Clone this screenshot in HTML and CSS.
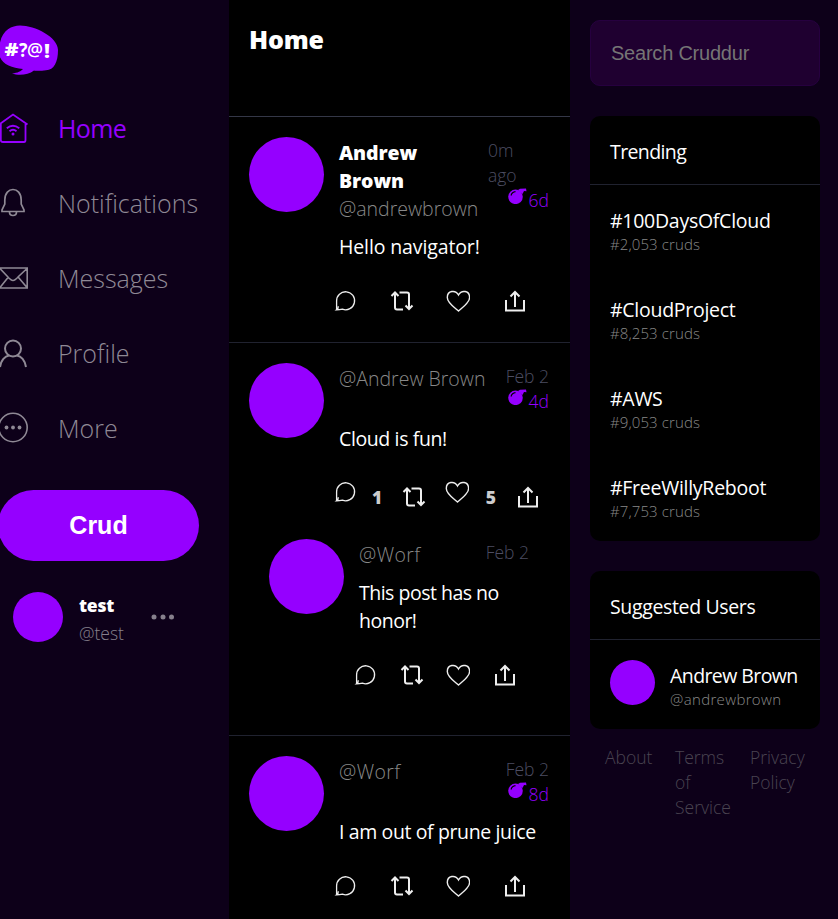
FILE: index.html
```html
<!DOCTYPE html>
<html lang="en">
<head>
<meta charset="utf-8">
<title>Cruddur</title>
<link rel="stylesheet" href="styles.css">
</head>
<body>
<svg class="defs" aria-hidden="true">
  <symbol id="comment" viewBox="0 0 24 24"><path d="M3.600 20.800V12A9 9 0 1 1 9.500 20.200Q6.500 20.800 3.600 20.800Q5.500 19.500 5.300 17.200" fill="none" stroke="currentColor" stroke-width="1.300"/></symbol>
  <symbol id="repost" viewBox="0 0 24 24"><path d="M1.500 7 5 3.500 8.500 7M5 4v14.500q0 2 2 2h6M9.500 3.500H17q2 0 2 2V20M15.500 16.500l3.500 3.500 3.500-3.500" fill="none" stroke="currentColor" stroke-width="2"/></symbol>
  <symbol id="heart" viewBox="0 0 24 24"><path d="M12.500 22C8.500 18.300 1.300 14 1.300 8.500 1.300 1.500 9.500.500 12.500 6 15.500.500 23.600 1.500 23.600 8.500 23.600 14 16.500 18.300 12.500 22Z" fill="none" stroke="currentColor" stroke-width="1.400"/></symbol>
  <symbol id="share" viewBox="0 0 24 24"><path d="M3 11v10.500h18V11M12 18V3M7.500 7.500 12 3l4.500 4.500" fill="none" stroke="currentColor" stroke-width="2"/></symbol>
  <symbol id="bomb" viewBox="0 0 19 16"><circle cx="7.500" cy="8.800" r="7.300" fill="#9500ff"/><path d="M10 2 14.500 6l1.500-3 2.500.3L18 .5l-6 .2Z" fill="#9500ff"/><path d="M3 7.500Q4 4 7.500 3.600" fill="none" stroke="#000" stroke-width="1.100"/></symbol>
</svg>
<div class="app">
  <nav class="sidebar">
    <svg class="logo" viewBox="0 0 60 52"><path d="M-1 27C-1 7 10 .5 20 .5 35 .5 58 12 58 25 58 37 54 45 46 45.300 41 46 36 46 34 45.500 28 50 19 51 12 48.500 18 48 21 46 23 44 10 43-1 38-1 27Z" fill="#9500ff"/><g class="logo-text"><text class="hash" x="4.500" y="31" textLength="14" lengthAdjust="spacingAndGlyphs">#</text><text x="19" y="32" textLength="8.500" lengthAdjust="spacingAndGlyphs">?</text><text class="at" x="27" y="30.500" textLength="16" lengthAdjust="spacingAndGlyphs">@</text><text x="43.500" y="32.500" textLength="7" lengthAdjust="spacingAndGlyphs">!</text></g></svg>
    <a class="nav-item active"><svg class="nav-icon" viewBox="0 0 30 32"><path d="M-1 12.500 13 2.500 27.500 12.500M.8 11.500V28q0 2 2 2H24q1.500 0 1.500-2V12M6.800 16.200q6-5 12.500 0M9.500 19.200q3.500-3 7 0" fill="none" stroke="currentColor" stroke-width="1.800"/><circle cx="13" cy="22" r="1.500" fill="currentColor"/></svg>Home</a>
    <a class="nav-item"><svg class="nav-icon" viewBox="0 0 30 32"><path d="M4.800 13C4.800-1 21.200-1 21.200 13V17L24 23V24.500H2V23L4.800 17ZM9.500 25q0 3.500 3.500 3.500t3.500-3.500" fill="none" stroke="currentColor" stroke-width="1.700"/></svg>Notifications</a>
    <a class="nav-item"><svg class="nav-icon" viewBox="0 0 30 32"><path d="M-1 6H27.200V26H-1ZM0 6.500 7.500 14.500Q11 18.500 13 18.500T18.500 14.500L27 6.500M0 25.500 8 15.500M27 25.500 18.500 15.500" fill="none" stroke="currentColor" stroke-width="1.600"/></svg>Messages</a>
    <a class="nav-item"><svg class="nav-icon" viewBox="0 0 30 32"><circle cx="13" cy="11.500" r="8" fill="none" stroke="currentColor" stroke-width="2"/><path d="M0 30C1 23 5 19 9 18.500M26 30C25 23 21 19 17 18.500" fill="none" stroke="currentColor" stroke-width="2"/></svg>Profile</a>
    <a class="nav-item"><svg class="nav-icon" viewBox="0 0 30 32"><circle cx="13" cy="15.500" r="14.200" fill="none" stroke="currentColor" stroke-width="1.600"/><g fill="currentColor"><circle cx="6.500" cy="15.500" r="1.900"/><circle cx="13" cy="15.500" r="1.900"/><circle cx="19.500" cy="15.500" r="1.900"/></g></svg>More</a>
    <button class="crud">Crud</button>
    <div class="profile">
      <div class="avatar medium"></div>
      <div class="profile-text"><div class="profile-name">test</div><div class="profile-handle">@test</div></div>
      <svg class="dots" viewBox="0 0 24 8"><g fill="currentColor"><circle cx="3" cy="4" r="2.500"/><circle cx="12" cy="4" r="2.500"/><circle cx="20.500" cy="4" r="2.500"/></g></svg>
    </div>
  </nav>
  <main class="feed">
    <header class="feed-head">Home</header>
    <article class="post">
      <div class="avatar"></div>
      <div class="body">
        <div class="meta tall"><div class="who"><b class="name">Andrew<br>Brown</b><span class="handle">@andrewbrown</span></div><div class="when"><span>0m<br>ago</span><span class="expires"><svg class="bomb"><use href="#bomb"/></svg>6d</span></div></div>
        <p class="message hello">Hello navigator!</p>
        <div class="actions"><svg><use href="#comment"/></svg><svg><use href="#repost"/></svg><svg><use href="#heart"/></svg><svg><use href="#share"/></svg></div>
      </div>
    </article>
    <article class="post threaded">
      <div class="avatar"></div>
      <div class="body">
        <div class="meta"><span class="handle">@Andrew Brown</span><div class="when"><span class="date">Feb 2</span><span class="expires"><svg class="bomb"><use href="#bomb"/></svg>4d</span></div></div>
        <p class="message">Cloud is fun!</p>
        <div class="actions counted"><span class="counter"><svg><use href="#comment"/></svg><b>1</b></span><svg><use href="#repost"/></svg><span class="counter"><svg><use href="#heart"/></svg><b>5</b></span><svg><use href="#share"/></svg></div>
      </div>
    </article>
    <article class="post reply">
      <div class="avatar"></div>
      <div class="body">
        <div class="meta short"><span class="handle worf">@Worf</span><div class="when"><span class="date">Feb 2</span></div></div>
        <p class="message honor">This post has no<br>honor!</p>
        <div class="actions"><svg><use href="#comment"/></svg><svg><use href="#repost"/></svg><svg><use href="#heart"/></svg><svg><use href="#share"/></svg></div>
      </div>
    </article>
    <article class="post">
      <div class="avatar"></div>
      <div class="body">
        <div class="meta"><span class="handle worf">@Worf</span><div class="when"><span class="date">Feb 2</span><span class="expires"><svg class="bomb"><use href="#bomb"/></svg>8d</span></div></div>
        <p class="message">I am out of prune juice</p>
        <div class="actions"><svg><use href="#comment"/></svg><svg><use href="#repost"/></svg><svg><use href="#heart"/></svg><svg><use href="#share"/></svg></div>
      </div>
    </article>
  </main>
  <aside class="aside">
    <input class="search" type="text" placeholder="Search Cruddur">
    <section class="card trending">
      <h2>Trending</h2>
      <div class="trend"><span class="tag">#100DaysOfCloud</span><small>#2,053 cruds</small></div>
      <div class="trend"><span class="tag">#CloudProject</span><small>#8,253 cruds</small></div>
      <div class="trend"><span class="tag">#AWS</span><small>#9,053 cruds</small></div>
      <div class="trend"><span class="tag">#FreeWillyReboot</span><small>#7,753 cruds</small></div>
    </section>
    <section class="card suggested">
      <h2>Suggested Users</h2>
      <div class="user"><div class="avatar small"></div><div class="user-text"><span class="tag">Andrew Brown</span><small>@andrewbrown</small></div></div>
    </section>
    <footer class="links"><a>About</a><a>Terms<br>of<br>Service</a><a>Privacy<br>Policy</a></footer>
  </aside>
</div>
</body>
</html>
```
FILE: styles.css
```css
* { box-sizing: border-box; }
body { margin: 0; background: #0d0019; color: #fff; font-family: "Open Sans", "Noto Sans", sans-serif; font-size: 19.5px; line-height: 28px; white-space: nowrap; }
.defs { display: none; }
svg { display: block; flex: none; overflow: visible; }
.app { display: grid; grid-template-columns: 229px 341px 268px; height: 919px; overflow: hidden; }
.avatar { flex: none; width: 75px; height: 75px; border-radius: 50%; background: #9500ff; }
.avatar.medium { width: 50px; height: 50px; }
.avatar.small { width: 45px; height: 45px; }

.sidebar { padding-top: 25px; overflow: hidden; }
.logo { width: 60px; height: 52px; margin-bottom: 13.5px; }
.logo-text { font: 700 19px "Open Sans", sans-serif; fill: #fff; }
.logo-text .hash { font-weight: 800; font-size: 18px; }
.logo-text .at { font-weight: 600; font-size: 18px; }
.nav-item { display: flex; align-items: center; height: 75px; color: #8f8995; font-size: 25px; font-weight: 300; letter-spacing: 0; }
.nav-item.active { color: #9500ff; font-weight: 500; letter-spacing: -.6px; }
.nav-icon { width: 30px; height: 32px; margin-right: 28px; }
.crud { display: block; width: 201px; height: 71px; margin: 24px 0 0 -2px; padding: 0; border: 0; border-radius: 36px; background: #9500ff; color: #fff; font: bold 25px "Liberation Sans", sans-serif; }
.profile { display: flex; align-items: center; padding: 0 0 0 13px; margin-top: 27px; }
.profile-text { width: 72px; margin: 3px 0 0 16px; font-size: 17.5px; }
.profile-name { font-weight: 800; letter-spacing: -.2px; }
.profile-handle { color: #86808c; font-weight: 300; }
.dots { width: 24px; height: 8px; color: #86808c; }

.feed { background: #000; overflow: hidden; }
.feed-head { height: 117px; padding: 25px 20px; border-bottom: 1px solid #343747; font-size: 25px; font-weight: 800; letter-spacing: -.2px; }
.post { display: flex; gap: 15px; padding: 20px 20px 21px; border-bottom: 1px solid #20222f; }
.post.threaded { padding-bottom: 0; border-bottom: 0; height: 176px; }
.post.reply { padding: 20px 40px 40px; height: 217px; }
.body { flex: 1; min-width: 0; }
.meta { display: flex; justify-content: space-between; height: 62px; padding-top: 2px; }
.meta.tall { height: 96px; }
.meta.short { height: 40px; }
.who { display: flex; flex-direction: column; }
.name { font-weight: 800; letter-spacing: -.1px; }
.handle { color: #888; font-weight: 300; }
.handle.worf { letter-spacing: .4px; }
.when { display: flex; flex-direction: column; width: 62px; margin-top: -1px; padding-right: 1px; color: #4c4d62; font-size: 17.5px; font-weight: 300; line-height: 25px; }
.date { align-self: flex-end; }
.expires { display: flex; align-self: flex-end; gap: 2px; color: #9500ff; }
.bomb { width: 19px; height: 16px; }
.message { margin: 0; font-weight: 400; letter-spacing: -.38px; }
.message.hello { letter-spacing: -.12px; }
.message.honor { letter-spacing: -.5px; }
.actions { display: flex; align-items: center; justify-content: space-between; height: 40px; width: 194px; margin: 20px 0 0 -6px; color: #eee; }
.actions svg { width: 24px; height: 24px; }
.reply .actions { width: 164px; }
.actions.counted { width: 207px; margin-top: 24px; color: #ccc; }
.counter { display: flex; gap: 15px; }
.counter svg { margin-top: -5px; color: #eee; }
.counter + svg + .counter svg { margin-left: -2px; margin-right: 2px; }
.counted > svg { color: #eee; }
.counter b { width: 10px; font-size: 17.5px; font-weight: 800; line-height: 24px; }

.aside { padding: 20px 18px 0 20px; }
.search { display: block; width: 230px; height: 66px; padding: 0 20px; border: 1px solid #26003f; border-radius: 10px; background: #1f0030; font: 20px "Liberation Sans", sans-serif; letter-spacing: -.22px; }
.search::placeholder { color: #757575; opacity: 1; }
.card { margin-top: 30px; border-radius: 10px; background: #000; overflow: hidden; }
.card h2 { height: 69px; margin: 0; padding: 22px 20px; border-bottom: 1px solid #20222f; font-size: 19.5px; font-weight: 400; letter-spacing: -.35px; }
.trending h2 { letter-spacing: -.6px; }
.trending { height: 425px; }
.suggested { height: 158px; }
.trend { display: flex; flex-direction: column; height: 89px; padding: 22px 20px; }
.tag { height: 27px; letter-spacing: -.27px; }
small { color: #888; font-size: 15px; font-weight: 300; line-height: 20px; letter-spacing: .1px; }
.user { display: flex; gap: 15px; padding: 20px; }
.user-text { display: flex; flex-direction: column; padding-top: 2px; }
.user .tag { letter-spacing: -.58px; }
.user small { letter-spacing: .35px; }
.links { display: grid; grid-template-columns: 70px 75px 70px; padding: 16px 0 0 15px; color: #4a4451; font-size: 17.5px; font-weight: 300; line-height: 25px; }
```
